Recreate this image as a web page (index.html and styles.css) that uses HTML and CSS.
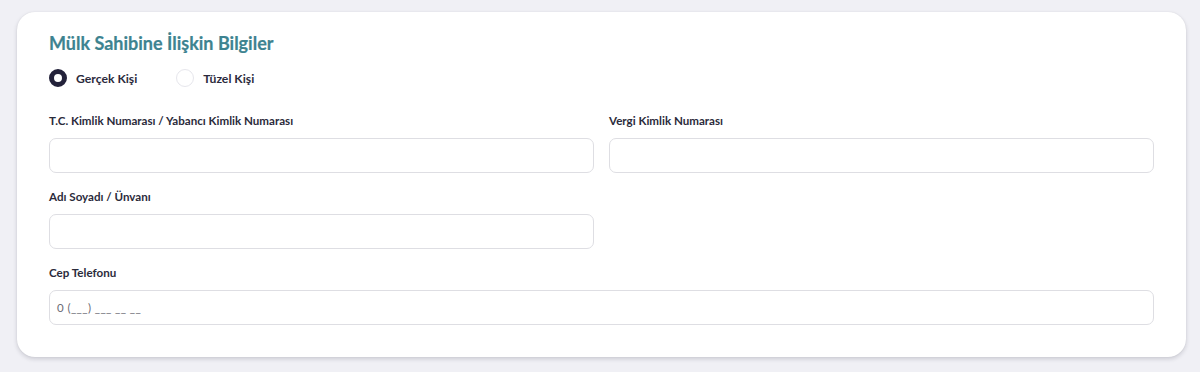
FILE: index.html
```html
<!DOCTYPE html>
<html lang="tr">
<head>
<meta charset="utf-8">
<title>Mülk Sahibine İlişkin Bilgiler</title>
<link rel="stylesheet" href="styles.css">
</head>
<body>
<section class="card">
  <h2 class="title">Mülk Sahibine İlişkin Bilgiler</h2>
  <div class="radios">
    <label class="radio">
      <span class="dot checked"></span>
      <span class="radio-text">Gerçek Kişi</span>
    </label>
    <label class="radio">
      <span class="dot"></span>
      <span class="radio-text">Tüzel Kişi</span>
    </label>
  </div>
  <div class="grid">
    <div class="field">
      <div class="label">T.C. Kimlik Numarası / Yabancı Kimlik Numarası</div>
      <div class="input"></div>
    </div>
    <div class="field">
      <div class="label">Vergi Kimlik Numarası</div>
      <div class="input"></div>
    </div>
    <div class="field">
      <div class="label">Adı Soyadı / Ünvanı</div>
      <div class="input"></div>
    </div>
    <div class="field"></div>
    <div class="field full">
      <div class="label">Cep Telefonu</div>
      <div class="input"><span class="placeholder">0 (___) ___ __ __</span></div>
    </div>
  </div>
</section>
</body>
</html>
```

FILE: styles.css
```css
* { box-sizing: border-box; }
html, body { margin: 0; padding: 0; }
body {
  background: #f0f0f5;
  font-family: "Lato", "Open Sans", sans-serif;
  color: #2b2b3b;
  padding: 12px 14px 0 17px;
  height: 372px;
}
.card {
  width: 1169px;
  height: 345px;
  background: #fff;
  border-radius: 18px;
  box-shadow: 0 2px 4px rgba(40, 40, 60, 0.18), 0 0 1px rgba(40, 40, 60, 0.12);
  padding: 20px 32px 0 32px;
}
.title {
  margin: 0;
  font-size: 18px;
  font-weight: 700;
  color: #3d8390;
  line-height: 22px;
  -webkit-text-stroke: 0.2px #3d8390;
}
.radios {
  display: flex;
  gap: 39px;
  margin-top: 15px;
  height: 18px;
  align-items: center;
}
.radio {
  display: flex;
  align-items: center;
  gap: 9px;
}
.dot {
  width: 18px;
  height: 18px;
  border-radius: 50%;
  border: 1px solid #e6e6ec;
  background: #fff;
}
.dot.checked {
  border: 5px solid #23223a;
  background: #fff;
}
.radio-text {
  font-size: 12.2px;
  font-weight: 700;
  color: #2b2a3d;
}
.grid {
  display: grid;
  grid-template-columns: 1fr 1fr;
  column-gap: 15px;
  row-gap: 16px;
  margin-top: 26px;
}
.field.full { grid-column: 1 / -1; }
.label {
  font-size: 11.6px;
  font-weight: 700;
  color: #2b2b3b;
  line-height: 16px;
  height: 16px;
}
.input {
  margin-top: 9px;
  height: 35px;
  border: 1px solid #dedee3;
  border-radius: 7px;
  display: flex;
  align-items: center;
  padding: 0 7px;
}
.placeholder {
  font-size: 11.5px;
  letter-spacing: 0.4px;
  color: #6b6b75;
}
```
